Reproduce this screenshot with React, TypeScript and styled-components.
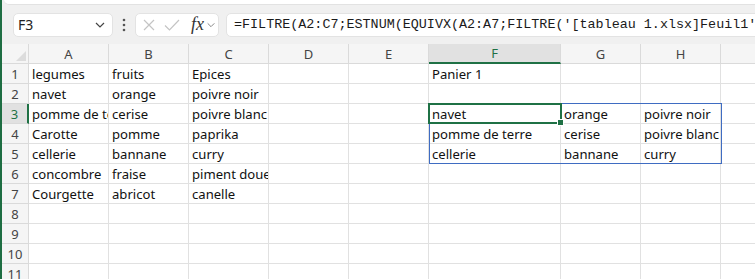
import styled, { createGlobalStyle } from 'styled-components';

const GlobalStyle = createGlobalStyle`
  html, body {
    margin: 0;
    padding: 0;
    background: #f0f0f0;
    overflow: hidden;
  }
`;

const COLS = ['A', 'B', 'C', 'D', 'E', 'F', 'G', 'H', 'I'];
const WIDTHS = [80, 80, 80, 80, 80, 132, 80, 80, 80];
const ROW_HEADER = 27;
const ROW_H = 20;

const data: Record<string, string> = {
  A1: 'legumes', B1: 'fruits', C1: 'Epices', F1: 'Panier 1',
  A2: 'navet', B2: 'orange', C2: 'poivre noir',
  A3: 'pomme de terre', B3: 'cerise', C3: 'poivre blanc',
  A4: 'Carotte', B4: 'pomme', C4: 'paprika',
  A5: 'cellerie', B5: 'bannane', C5: 'curry',
  A6: 'concombre', B6: 'fraise', C6: 'piment doue',
  A7: 'Courgette', B7: 'abricot', C7: 'canelle',
  F3: 'navet', G3: 'orange', H3: 'poivre noir',
  F4: 'pomme de terre', G4: 'cerise', H4: 'poivre blanc',
  F5: 'cellerie', G5: 'bannane', H5: 'curry',
};

const Window = styled.div`
  width: 755px;
  height: 279px;
  border-left: 2px solid #1f6e43;
  box-sizing: border-box;
  display: flex;
  flex-direction: column;
  overflow: hidden;
  font-family: 'Noto Sans', 'Open Sans', sans-serif;
`;

const RibbonEdge = styled.div`
  height: 4px;
  margin-left: 2px;
  background: #ffffff;
  border-bottom: 1px solid #e2e2e2;
  border-bottom-left-radius: 6px;
  flex-shrink: 0;
`;

const FormulaBar = styled.div`
  height: 39px;
  display: flex;
  align-items: center;
  padding-left: 11px;
  flex-shrink: 0;
`;

const Field = styled.div<{ $w?: number }>`
  height: 24px;
  box-sizing: border-box;
  background: #ffffff;
  border: 1px solid #e3e3e3;
  border-radius: 5px;
  display: flex;
  align-items: center;
  ${p => (p.$w ? `width: ${p.$w}px; flex-shrink: 0;` : 'flex: 1;')}
`;

const NameBox = styled(Field)`
  justify-content: space-between;
  padding: 0 6px 0 4px;
  font-size: 14px;
  color: #222;
`;

const Dots = styled.div`
  width: 22px;
  display: flex;
  justify-content: center;
`;

const IconBox = styled(Field)`
  padding-left: 5px;
  margin-right: 7px;
`;

const Fx = styled.span`
  font-family: 'Liberation Serif', serif;
  font-style: italic;
  font-size: 18px;
  color: #333;
  margin: 0 2px 0 10px;
`;

const FormulaInput = styled(Field)`
  min-width: 0;
  margin-right: -40px;
  padding-left: 7px;
  font-family: 'Liberation Mono', monospace;
  font-size: 13.4px;
  color: #1a1a1a;
  white-space: nowrap;
  overflow: hidden;
`;

const Sheet = styled.div`
  position: relative;
  flex: 1;
  background: #ffffff;
  display: grid;
  grid-template-columns: ${ROW_HEADER}px ${WIDTHS.map(w => `${w}px`).join(' ')};
  grid-auto-rows: ${ROW_H}px;
`;

const Corner = styled.div`
  background: #f5f5f5;
  border-bottom: 1px solid #dadada;
  border-right: 1px solid #dadada;
  box-sizing: border-box;
  display: flex;
  align-items: flex-end;
  justify-content: flex-end;
  padding: 0 2px 2px 0;
`;

const ColHead = styled.div<{ $active?: boolean }>`
  box-sizing: border-box;
  background: ${p => (p.$active ? '#e1e1e1' : '#f5f5f5')};
  border-right: 1px solid #dadada;
  border-bottom: ${p => (p.$active ? '2px solid #1f7145' : '1px solid #dadada')};
  color: ${p => (p.$active ? '#1f7145' : '#444')};
  font-size: 13px;
  display: flex;
  align-items: center;
  justify-content: center;
`;

const RowHead = styled.div<{ $active?: boolean }>`
  box-sizing: border-box;
  background: ${p => (p.$active ? '#e1e1e1' : '#f5f5f5')};
  border-bottom: 1px solid #dadada;
  border-right: ${p => (p.$active ? '2px solid #1f7145' : '1px solid #dadada')};
  color: ${p => (p.$active ? '#1f7145' : '#444')};
  font-size: 13px;
  display: flex;
  align-items: center;
  justify-content: center;
`;

const Cell = styled.div`
  box-sizing: border-box;
  border-right: 1px solid #e1e1e1;
  border-bottom: 1px solid #e1e1e1;
  padding: 1px 0 0 3px;
  font-size: 13.1px;
  line-height: 19px;
  color: #111;
  white-space: nowrap;
  overflow: hidden;
`;

const Spill = styled.div`
  position: absolute;
  left: ${ROW_HEADER + 400}px;
  top: ${ROW_H * 3 - 1}px;
  width: 293px;
  height: 61px;
  border: 1px solid #3f6cc2;
  box-sizing: border-box;
  pointer-events: none;
`;

const Active = styled.div`
  position: absolute;
  left: ${ROW_HEADER + 399}px;
  top: ${ROW_H * 3 - 1}px;
  width: 134px;
  height: 21px;
  border: 2px solid #1f7145;
  box-sizing: border-box;
  pointer-events: none;

  &::after {
    content: '';
    position: absolute;
    right: -4px;
    bottom: -4px;
    width: 5px;
    height: 5px;
    background: #1f7145;
    border: 1px solid #ffffff;
  }
`;

const Chevron = ({ size = 12, color = '#444' }: { size?: number; color?: string }) => (
  <svg width={size} height={size} viewBox="0 0 12 12">
    <path d="M2 4l4 4 4-4" fill="none" stroke={color} strokeWidth="1.2" />
  </svg>
);

const App = () => {
  const rows = Array.from({ length: 11 }, (_, i) => i + 1);
  return (
    <Window>
      <GlobalStyle />
      <RibbonEdge />
      <FormulaBar>
        <NameBox $w={100}>
          <span>F3</span>
          <Chevron />
        </NameBox>
        <Dots>
          <svg width="4" height="14" viewBox="0 0 4 14">
            <circle cx="2" cy="2" r="1.3" fill="#555" />
            <circle cx="2" cy="7" r="1.3" fill="#555" />
            <circle cx="2" cy="12" r="1.3" fill="#555" />
          </svg>
        </Dots>
        <IconBox $w={84}>
          <svg width="16" height="16" viewBox="0 0 16 16">
            <path d="M3 3l10 10M13 3L3 13" stroke="#c4c4c4" strokeWidth="1.2" fill="none" />
          </svg>
          <svg width="18" height="16" viewBox="0 0 18 16" style={{ marginLeft: 6 }}>
            <path d="M2 8.5l4.5 4.5L16 3" stroke="#c4c4c4" strokeWidth="1.2" fill="none" />
          </svg>
          <Fx>fx</Fx>
          <Chevron size={10} color="#888" />
        </IconBox>
        <FormulaInput>=FILTRE(A2:C7;ESTNUM(EQUIVX(A2:A7;FILTRE('[tableau 1.xlsx]Feuil1'!$A$2:$A$7</FormulaInput>
      </FormulaBar>
      <Sheet>
        <Corner>
          <svg width="10" height="10" viewBox="0 0 10 10">
            <path d="M10 0L10 10L0 10Z" fill="#dcdcdc" />
          </svg>
        </Corner>
        {COLS.map(c => (
          <ColHead key={c} $active={c === 'F'}>
            {c === 'I' ? '' : c}
          </ColHead>
        ))}
        {rows.map(r => [
          <RowHead key={`h${r}`} $active={r === 3}>
            {r}
          </RowHead>,
          ...COLS.map(c => <Cell key={`${c}${r}`}>{data[`${c}${r}`] ?? ''}</Cell>),
        ])}
        <Spill />
        <Active />
      </Sheet>
    </Window>
  );
};

export default App;
